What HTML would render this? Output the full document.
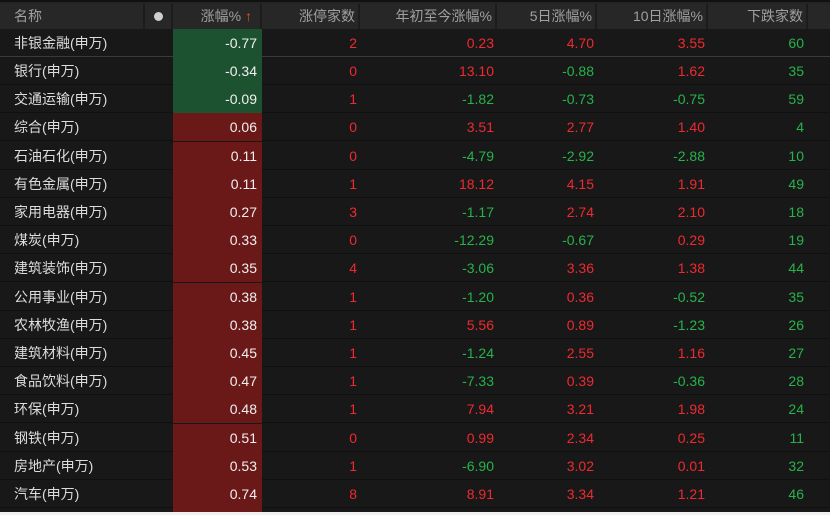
<!DOCTYPE html><html><head><meta charset="utf-8"><style>
body{margin:0;width:830px;height:515px;background:#f0f0f0;overflow:hidden;font-family:"Liberation Sans","Noto Sans CJK SC",sans-serif;font-size:14px}
#w{position:absolute;left:0;top:0;width:830px;height:512px;background:#181818;overflow:hidden}
.h{position:absolute;top:0;height:29px;left:0;width:830px;background:#242424;border-top:2px solid #111;box-sizing:border-box}
.hc{position:absolute;top:2px;height:25px;line-height:25px;color:#a0a0a0;background:#272727;text-align:right;box-sizing:border-box;padding-right:3px;border-right:2px solid #1c1c1c}
.r{position:absolute;left:0;width:830px;height:28px;border-bottom:1px solid #101010;box-sizing:border-box}
.c{position:absolute;top:0;height:27px;line-height:28px;text-align:right}
.n{left:14px;color:#dcdcdc;text-align:left}
.R{color:#ee2a30}.G{color:#26b34a}
.p{left:173px;width:89px;padding-right:5px;box-sizing:border-box;color:#f0f0f0;height:28px}
</style></head><body><div id="w">
<div class="h">
<div class="hc" style="left:0;width:145px;text-align:left;padding-left:14px">名称</div>
<div class="hc" style="left:145px;width:28px;text-align:center;padding:0"><span style="display:inline-block;width:9px;height:9px;border-radius:50%;background:#cfcfcf"></span></div>
<div class="hc" style="left:173px;width:89px;padding-right:8px">涨幅% <span style="color:#f0501e;font-weight:bold">↑</span></div>
<div class="hc" style="left:262px;width:98px">涨停家数</div>
<div class="hc" style="left:360px;width:137px">年初至今涨幅%</div>
<div class="hc" style="left:497px;width:100px">5日涨幅%</div>
<div class="hc" style="left:597px;width:111px">10日涨幅%</div>
<div class="hc" style="left:708px;width:100px">下跌家数</div>
<div class="hc" style="left:808px;width:22px;border:0"></div>
</div>
</div>
<div style="position:absolute;left:0;top:0">
<div class="r" style="top:29px;border-bottom:1px solid #3a3a3a"><div class="c n">非银金融(申万)</div><div class="c p" style="background:#1c5230">-0.77</div><div class="c R" style="right:473px">2</div><div class="c R" style="right:336px">0.23</div><div class="c R" style="right:236px">4.70</div><div class="c R" style="right:125px">3.55</div><div class="c G" style="right:26px">60</div></div>
<div class="r" style="top:57px"><div class="c n">银行(申万)</div><div class="c p" style="background:#1c5230">-0.34</div><div class="c R" style="right:473px">0</div><div class="c R" style="right:336px">13.10</div><div class="c G" style="right:236px">-0.88</div><div class="c R" style="right:125px">1.62</div><div class="c G" style="right:26px">35</div></div>
<div class="r" style="top:85px"><div class="c n">交通运输(申万)</div><div class="c p" style="background:#1c5230">-0.09</div><div class="c R" style="right:473px">1</div><div class="c G" style="right:336px">-1.82</div><div class="c G" style="right:236px">-0.73</div><div class="c G" style="right:125px">-0.75</div><div class="c G" style="right:26px">59</div></div>
<div class="r" style="top:113px"><div class="c n">综合(申万)</div><div class="c p" style="background:#6b1818">0.06</div><div class="c R" style="right:473px">0</div><div class="c R" style="right:336px">3.51</div><div class="c R" style="right:236px">2.77</div><div class="c R" style="right:125px">1.40</div><div class="c G" style="right:26px">4</div></div>
<div class="r" style="top:142px"><div class="c n">石油石化(申万)</div><div class="c p" style="background:#6b1818">0.11</div><div class="c R" style="right:473px">0</div><div class="c G" style="right:336px">-4.79</div><div class="c G" style="right:236px">-2.92</div><div class="c G" style="right:125px">-2.88</div><div class="c G" style="right:26px">10</div></div>
<div class="r" style="top:170px"><div class="c n">有色金属(申万)</div><div class="c p" style="background:#6b1818">0.11</div><div class="c R" style="right:473px">1</div><div class="c R" style="right:336px">18.12</div><div class="c R" style="right:236px">4.15</div><div class="c R" style="right:125px">1.91</div><div class="c G" style="right:26px">49</div></div>
<div class="r" style="top:198px"><div class="c n">家用电器(申万)</div><div class="c p" style="background:#6b1818">0.27</div><div class="c R" style="right:473px">3</div><div class="c G" style="right:336px">-1.17</div><div class="c R" style="right:236px">2.74</div><div class="c R" style="right:125px">2.10</div><div class="c G" style="right:26px">18</div></div>
<div class="r" style="top:226px"><div class="c n">煤炭(申万)</div><div class="c p" style="background:#6b1818">0.33</div><div class="c R" style="right:473px">0</div><div class="c G" style="right:336px">-12.29</div><div class="c G" style="right:236px">-0.67</div><div class="c R" style="right:125px">0.29</div><div class="c G" style="right:26px">19</div></div>
<div class="r" style="top:254px"><div class="c n">建筑装饰(申万)</div><div class="c p" style="background:#6b1818">0.35</div><div class="c R" style="right:473px">4</div><div class="c G" style="right:336px">-3.06</div><div class="c R" style="right:236px">3.36</div><div class="c R" style="right:125px">1.38</div><div class="c G" style="right:26px">44</div></div>
<div class="r" style="top:283px"><div class="c n">公用事业(申万)</div><div class="c p" style="background:#6b1818">0.38</div><div class="c R" style="right:473px">1</div><div class="c G" style="right:336px">-1.20</div><div class="c R" style="right:236px">0.36</div><div class="c G" style="right:125px">-0.52</div><div class="c G" style="right:26px">35</div></div>
<div class="r" style="top:311px"><div class="c n">农林牧渔(申万)</div><div class="c p" style="background:#6b1818">0.38</div><div class="c R" style="right:473px">1</div><div class="c R" style="right:336px">5.56</div><div class="c R" style="right:236px">0.89</div><div class="c G" style="right:125px">-1.23</div><div class="c G" style="right:26px">26</div></div>
<div class="r" style="top:339px"><div class="c n">建筑材料(申万)</div><div class="c p" style="background:#6b1818">0.45</div><div class="c R" style="right:473px">1</div><div class="c G" style="right:336px">-1.24</div><div class="c R" style="right:236px">2.55</div><div class="c R" style="right:125px">1.16</div><div class="c G" style="right:26px">27</div></div>
<div class="r" style="top:367px"><div class="c n">食品饮料(申万)</div><div class="c p" style="background:#6b1818">0.47</div><div class="c R" style="right:473px">1</div><div class="c G" style="right:336px">-7.33</div><div class="c R" style="right:236px">0.39</div><div class="c G" style="right:125px">-0.36</div><div class="c G" style="right:26px">28</div></div>
<div class="r" style="top:395px"><div class="c n">环保(申万)</div><div class="c p" style="background:#6b1818">0.48</div><div class="c R" style="right:473px">1</div><div class="c R" style="right:336px">7.94</div><div class="c R" style="right:236px">3.21</div><div class="c R" style="right:125px">1.98</div><div class="c G" style="right:26px">24</div></div>
<div class="r" style="top:424px"><div class="c n">钢铁(申万)</div><div class="c p" style="background:#6b1818">0.51</div><div class="c R" style="right:473px">0</div><div class="c R" style="right:336px">0.99</div><div class="c R" style="right:236px">2.34</div><div class="c R" style="right:125px">0.25</div><div class="c G" style="right:26px">11</div></div>
<div class="r" style="top:452px"><div class="c n">房地产(申万)</div><div class="c p" style="background:#6b1818">0.53</div><div class="c R" style="right:473px">1</div><div class="c G" style="right:336px">-6.90</div><div class="c R" style="right:236px">3.02</div><div class="c R" style="right:125px">0.01</div><div class="c G" style="right:26px">32</div></div>
<div class="r" style="top:480px"><div class="c n">汽车(申万)</div><div class="c p" style="background:#6b1818">0.74</div><div class="c R" style="right:473px">8</div><div class="c R" style="right:336px">8.91</div><div class="c R" style="right:236px">3.34</div><div class="c R" style="right:125px">1.21</div><div class="c G" style="right:26px">46</div></div>
<div class="r" style="top:508px;height:4px;border:0"><div class="c p" style="background:#6b1818;height:4px"></div></div>
</div>
</body></html>
